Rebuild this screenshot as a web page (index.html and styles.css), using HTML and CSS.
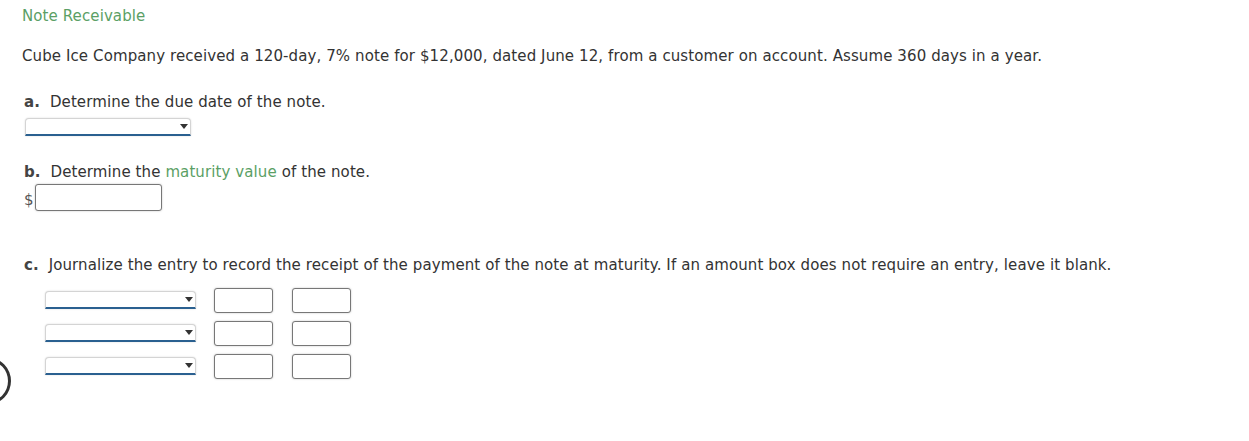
FILE: index.html
```html
<!DOCTYPE html>
<html>
<head>
<meta charset="utf-8">
<link rel="stylesheet" href="styles.css">
</head>
<body>
<div class="page">
  <div class="title">Note Receivable</div>
  <p class="intro">Cube Ice Company received a 120-day, 7% note for $12,000, dated June 12, from a customer on account. Assume 360 days in a year.</p>

  <div class="part part-a">
    <div class="q"><b>a.</b> Determine the due date of the note.</div>
    <div class="sel sel-a"><span class="arrow"></span></div>
  </div>

  <div class="part part-b">
    <div class="q"><b>b.</b> Determine the <span class="term">maturity value</span> of the note.</div>
    <div class="money"><span class="dollar">$</span><span class="box box-b"></span></div>
  </div>

  <div class="part part-c">
    <div class="q"><b>c.</b> Journalize the entry to record the receipt of the payment of the note at maturity. If an amount box does not require an entry, leave it blank.</div>
    <div class="journal">
      <div class="jrow"><div class="sel sel-c"><span class="arrow"></span></div><span class="box box-c"></span><span class="box box-c"></span></div>
      <div class="jrow"><div class="sel sel-c"><span class="arrow"></span></div><span class="box box-c"></span><span class="box box-c"></span></div>
      <div class="jrow"><div class="sel sel-c"><span class="arrow"></span></div><span class="box box-c"></span><span class="box box-c"></span></div>
    </div>
  </div>
</div>
<div class="ring"></div>
</body>
</html>
```

FILE: styles.css
```css
html, body {
  margin: 0;
  padding: 0;
  background: #fff;
}
body {
  font-family: "DejaVu Sans", Verdana, sans-serif;
  font-size: 15px;
  letter-spacing: 0.1px;
  color: #333;
  position: relative;
  overflow: hidden;
  height: 441px;
}
.page {
  padding: 6px 0 0 22px;
}
.title {
  color: #5b9f65;
  line-height: 20px;
}
.intro {
  margin: 20px 0 0 0;
  line-height: 20px;
}
.q {
  line-height: 20px;
}
.q b {
  font-weight: bold;
  color: #444;
  margin-right: 5px;
}
.term {
  color: #5b9f65;
}
.part-a {
  margin: 26px 0 0 2px;
}
.sel {
  box-sizing: border-box;
  height: 18px;
  border: 1px solid #d4d4d4;
  border-bottom: 2px solid #2a6090;
  border-radius: 4px 4px 0 0;
  box-shadow: 0 0 2px rgba(0,0,0,0.15);
  position: relative;
  background: #fff;
}
.sel-a {
  width: 166px;
  margin: 6px 0 0 1px;
}
.arrow {
  position: absolute;
  right: 2px;
  top: 5px;
  width: 0;
  height: 0;
  border-left: 4px solid transparent;
  border-right: 4px solid transparent;
  border-top: 5px solid #333;
}
.part-b {
  margin: 26px 0 0 2px;
}
.money {
  display: flex;
  align-items: center;
  margin-top: 2px;
}
.dollar {
  color: #555;
  line-height: 20px;
  margin-top: 4px;
}
.box {
  display: block;
  box-sizing: border-box;
  border: 1px solid #777;
  border-radius: 3px;
  box-shadow: 0 0 2px rgba(0,0,0,0.25);
  background: #fff;
}
.box-b {
  width: 127px;
  height: 27px;
  margin-left: 1px;
}
.part-c {
  margin: 44px 0 0 2px;
}
.journal {
  display: flex;
  flex-direction: column;
  gap: 8px;
  margin: 13px 0 0 21px;
}
.jrow {
  display: flex;
  align-items: flex-start;
}
.sel-c {
  width: 151px;
  margin-top: 3px;
}
.box-c {
  width: 59px;
  height: 25px;
}
.sel-c + .box-c {
  margin-left: 18px;
}
.box-c + .box-c {
  margin-left: 19px;
}
.ring {
  position: absolute;
  left: -33px;
  top: 358px;
  width: 38px;
  height: 40px;
  border: 3px solid #333;
  border-radius: 50%;
}
```
